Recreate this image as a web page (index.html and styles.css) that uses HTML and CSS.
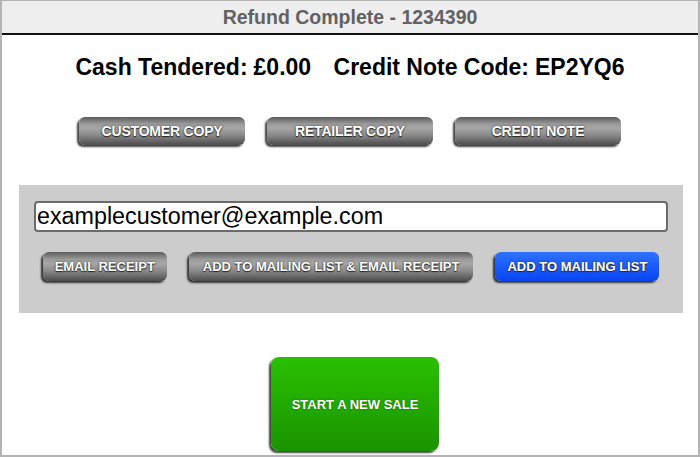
FILE: index.html
```html
<!DOCTYPE html>
<html lang="en">
<head>
  <meta charset="UTF-8" />
  <title>Refund Complete</title>
  <link rel="stylesheet" href="styles.css">
</head>
<body>
  <div class="frame">
    <div class="title-bar">Refund Complete - 1234390</div>

    <div class="totals">
      <span class="label">Cash Tendered:</span><span class="value">£0.00</span>
      <span class="label gap">Credit Note Code:</span><span class="value">EP2YQ6</span>
    </div>

    <div class="print-row">
      <button class="btn btn-grey btn-wide">CUSTOMER COPY</button>
      <button class="btn btn-grey btn-wide">RETAILER COPY</button>
      <button class="btn btn-grey btn-wide">CREDIT NOTE</button>
    </div>

    <div class="email-panel">
      <input type="text" class="email-field" value="examplecustomer@example.com">
      <div class="email-row">
        <button class="btn btn-grey">EMAIL RECEIPT</button>
        <button class="btn btn-grey btn-long">ADD TO MAILING LIST &amp; EMAIL RECEIPT</button>
        <button class="btn btn-blue">ADD TO MAILING LIST</button>
      </div>
    </div>

    <div class="new-sale-row">
      <button class="btn btn-green">START A NEW SALE</button>
    </div>
  </div>
</body>
</html>
```

FILE: styles.css
```css
body {
  margin: 0;
  font-family: "Liberation Sans", Arial, sans-serif;
  background: #fff;
}

.frame {
  height: 457px;
  box-sizing: border-box;
  border: 2px solid #b4b4b4;
  border-top: 1px solid #b4b4b4;
  overflow: hidden;
}

.title-bar {
  height: 32px;
  line-height: 32px;
  background: #eeeeee;
  border-bottom: 2px solid #111;
  text-align: center;
  font-weight: bold;
  font-size: 19.5px;
  color: #626262;
}

.totals {
  text-align: center;
  font-weight: bold;
  font-size: 23px;
  line-height: 27px;
  color: #000;
  margin-top: 19px;
  height: 27px;
}

.totals .value {
  margin-left: 6px;
}

.totals .gap {
  margin-left: 16px;
}

.print-row {
  display: flex;
  justify-content: center;
  gap: 22px;
  margin-top: 36px;
}

.btn {
  font-family: "Liberation Sans", Arial, sans-serif;
  font-weight: bold;
  font-size: 13px;
  color: #fff;
  text-shadow: 0 0 2px #333, 0 1px 1px #222;
  border: none;
  border-radius: 6px;
  height: 28px;
  padding: 0 12px;
  cursor: pointer;
  box-shadow: -2px 2px 2px rgba(0, 0, 0, 0.75);
}

.btn-grey {
  background: linear-gradient(#5c5c5c 0%, #9a9a9a 25%, #a6a6a6 40%, #8a8a8a 65%, #4c4c4c 100%);
}

.btn-wide {
  width: 166px;
  font-size: 14px;
  letter-spacing: -0.2px;
}

.btn-long {
  padding: 0 14px;
}

.btn-blue {
  background: linear-gradient(#2e72ff 0%, #1a5cff 50%, #0a44ee 100%);
}

.email-panel {
  background: #cccccc;
  margin: 40px 15px 0 17px;
  height: 128px;
  box-sizing: border-box;
  padding: 16px 15px 0 15px;
}

.email-field {
  display: block;
  width: 100%;
  height: 31px;
  box-sizing: border-box;
  border: 2px solid #6a6a6a;
  border-radius: 4px;
  padding: 0 1px;
  font-family: "Liberation Sans", Arial, sans-serif;
  font-size: 23.3px;
  color: #000;
  background: #fff;
}

.email-row {
  display: flex;
  justify-content: center;
  gap: 22px;
  margin-top: 20px;
}

.email-row .btn {
  height: 29px;
}

.new-sale-row {
  display: flex;
  justify-content: center;
  margin-top: 44px;
  padding-left: 10px;
}

.btn-green {
  width: 168px;
  height: 94px;
  border-radius: 8px;
  background: linear-gradient(#2ac000 0%, #22aa00 50%, #1a9400 100%);
  text-shadow: 0 0 2px #175a00;
}
```
